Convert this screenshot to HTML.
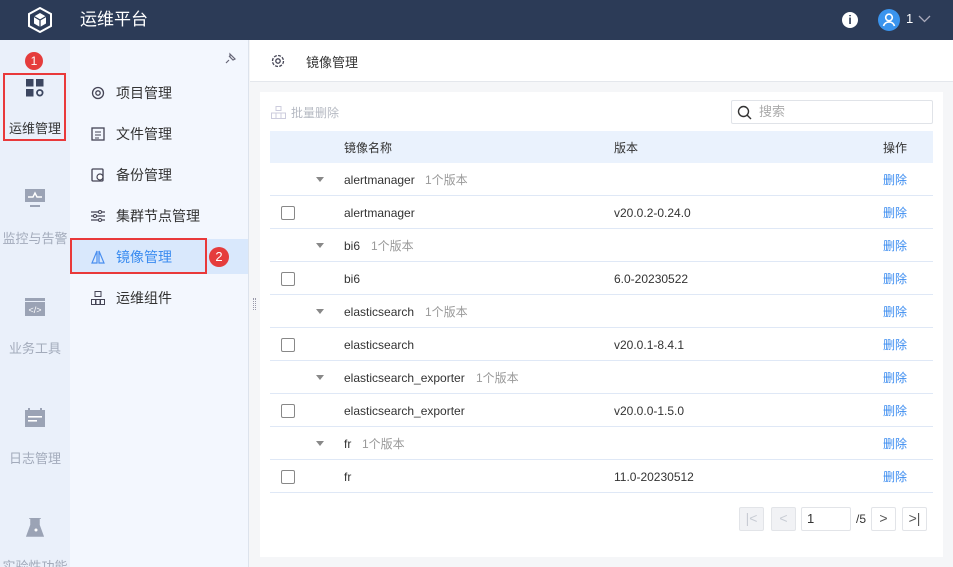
<!DOCTYPE html>
<html><head><meta charset="utf-8"><style>
*{box-sizing:border-box;margin:0;padding:0}
html,body{width:953px;height:567px;overflow:hidden}
body{font-family:"Liberation Sans","Noto Sans CJK SC",sans-serif;font-size:13px;line-height:16px;color:#333;background:#f5f6f8;position:relative}
.top{position:absolute;left:0;top:0;width:953px;height:40px;background:#2c3b57;color:#fff}
.rail{position:absolute;left:0;top:40px;width:70px;height:527px;background:#eaf0fa}
.nav2{position:absolute;left:70px;top:40px;width:179px;height:527px;background:#f3f7fe;border-right:1px solid #dde3ec}
.ri{position:absolute;left:0;width:70px;text-align:center;color:#a3abbb;font-size:13px}
.ni{position:absolute;left:90px;font-size:14px;color:#333}
.hdr{position:absolute;left:250px;top:40px;width:703px;height:42px;background:#fff;border-bottom:1px solid #e4e7ec}
.card{position:absolute;left:260px;top:92px;width:683px;height:465px;background:#fff}
.row{position:absolute;left:270px;width:663px;height:33px;border-bottom:1px solid #dfe8f6;font-size:12px}
.row span{position:absolute;top:10px;line-height:14px}
.cb{position:absolute;left:11px;top:10px;width:14px;height:14px;border:1px solid #888;border-radius:2px;background:#fff}
.tri{position:absolute;left:46px;top:14px;border-left:4px solid transparent;border-right:4px solid transparent;border-top:5px solid #888}
.del{left:613px;color:#3b8cf0}
.pb{position:absolute;top:507px;width:25px;height:24px;border:1px solid #e2e4e8;border-radius:2px;background:#fff;color:#555;text-align:center;line-height:21px;font-size:14px}
</style></head><body>
<div class="top">
<svg style="position:absolute;left:27px;top:7px" width="26" height="26" viewBox="0 0 26 26"><path d="M13 1 L24 7 V19 L13 25 L2 19 V7Z" fill="none" stroke="#fff" stroke-width="2"/><path d="M13 6 L19 9.5 V16.5 L13 20 L7 16.5 V9.5Z" fill="#fff"/><path d="M7 9.5 L13 13 L19 9.5 M13 13V20" stroke="#2c3b57" stroke-width="1.2" fill="none"/></svg>
<div style="position:absolute;left:80px;top:10px;font-size:17px;line-height:20px">运维平台</div>
<div style="position:absolute;left:842px;top:12px;width:16px;height:16px;border-radius:50%;background:#fff;color:#2c3b57;font-weight:bold;font-size:12px;text-align:center;line-height:16px">i</div>
<div style="position:absolute;left:878px;top:9px;width:22px;height:22px;border-radius:50%;background:#3a94ee"><svg width="22" height="22" viewBox="0 0 22 22"><circle cx="11" cy="8.5" r="3.3" fill="none" stroke="#fff" stroke-width="1.6"/><path d="M5.5 17c1-3 3-4 5.5-4s4.5 1 5.5 4" fill="none" stroke="#fff" stroke-width="1.6"/></svg></div>
<div style="position:absolute;left:906px;top:11px;font-size:13px">1</div>
<svg style="position:absolute;left:918px;top:15px" width="13" height="8"><path d="M1 1l5.5 5.5L12 1" fill="none" stroke="#aab" stroke-width="1.3"/></svg>
</div>
<div class="rail">
<div style="position:absolute;left:3px;top:33px;width:63px;height:68px;border:2px solid #e9393a"></div>
<div style="position:absolute;left:25px;top:12px;width:18px;height:18px;border-radius:50%;background:#e53c3c;color:#fff;font-size:12px;text-align:center;line-height:18px">1</div>
<svg style="position:absolute;left:26px;top:39px" width="18" height="18"><rect x="0" y="0" width="7.5" height="7.5" fill="#3c4660"/><rect x="10" y="0" width="7.5" height="7.5" fill="#3c4660"/><rect x="0" y="10" width="7.5" height="7.5" fill="#3c4660"/><circle cx="13.8" cy="13.8" r="2.8" fill="none" stroke="#3c4660" stroke-width="1.8"/></svg>
<div class="ri" style="top:81px;color:#333">运维管理</div>
<svg style="position:absolute;left:25px;top:149px" width="20" height="19"><rect x="0" y="0" width="20" height="13" fill="#9ba3b5"/><path d="M3 8h5l2-4 2 4h5" stroke="#fff" fill="none" stroke-width="1.4"/><rect x="5" y="16" width="10" height="2" fill="#9ba3b5"/></svg>
<div class="ri" style="top:191px">监控与告警</div>
<svg style="position:absolute;left:25px;top:258px" width="20" height="18"><rect width="20" height="18" fill="#9ba3b5"/><rect y="3" width="20" height="1" fill="#eaf0fa"/><text x="10" y="15" font-size="9" fill="#fff" text-anchor="middle" font-family="Liberation Sans">&lt;/&gt;</text></svg>
<div class="ri" style="top:301px">业务工具</div>
<svg style="position:absolute;left:25px;top:368px" width="20" height="19"><rect x="0" y="2" width="20" height="17" fill="#9ba3b5"/><rect x="3" y="0" width="2" height="4" fill="#9ba3b5"/><rect x="15" y="0" width="2" height="4" fill="#9ba3b5"/><rect x="3" y="8" width="14" height="1.6" fill="#fff"/><rect x="3" y="12" width="9" height="1.6" fill="#fff"/></svg>
<div class="ri" style="top:411px">日志管理</div>
<svg style="position:absolute;left:26px;top:478px" width="18" height="19"><path d="M3 0h12M5 0v7L1 18h16L13 7V0" fill="#9ba3b5" stroke="#9ba3b5" stroke-width="1.5"/><circle cx="10" cy="12" r="1.5" fill="#fff"/></svg>
<div class="ri" style="top:519px">实验性功能</div>
</div>
<div class="nav2">
<svg style="position:absolute;left:154px;top:12px" width="13" height="13"><path d="M2 11l3-3M5 4l4 4M6 2l5 5-2 1-3-3z" stroke="#667" fill="none" stroke-width="1.2"/></svg>
<div style="position:absolute;left:0;top:199px;width:178px;height:35px;background:#d9e8fc"></div>
<div style="position:absolute;left:0;top:198px;width:137px;height:36px;border:2px solid #e9393a"></div>
<div style="position:absolute;left:139px;top:207px;width:20px;height:20px;border-radius:50%;background:#e53c3c;color:#fff;font-size:13px;text-align:center;line-height:20px">2</div>
</div>
<svg style="position:absolute;left:91px;top:86px" width="14" height="14"><circle cx="7" cy="7" r="5.5" fill="none" stroke="#445" stroke-width="1.3"/><circle cx="7" cy="7" r="2.2" fill="none" stroke="#445" stroke-width="1.3"/></svg>
<div class="ni" style="left:116px;top:85px">项目管理</div>
<svg style="position:absolute;left:91px;top:127px" width="14" height="14"><rect x="1" y="1" width="12" height="12" fill="none" stroke="#445" stroke-width="1.3"/><path d="M4 5h6M4 8h6M4 11h4" stroke="#445"/></svg>
<div class="ni" style="left:116px;top:126px">文件管理</div>
<svg style="position:absolute;left:91px;top:168px" width="14" height="14"><rect x="1" y="1" width="11" height="12" rx="1" fill="none" stroke="#445" stroke-width="1.3"/><circle cx="9" cy="9" r="3" fill="#fff" stroke="#445" stroke-width="1.2"/></svg>
<div class="ni" style="left:116px;top:167px">备份管理</div>
<svg style="position:absolute;left:91px;top:209px" width="14" height="14"><path d="M0 3h14M0 7h14M0 11h14" stroke="#445" stroke-width="1.2"/><circle cx="9" cy="3" r="1.5" fill="#fff" stroke="#445"/><circle cx="4" cy="7" r="1.5" fill="#fff" stroke="#445"/><circle cx="9" cy="11" r="1.5" fill="#fff" stroke="#445"/></svg>
<div class="ni" style="left:116px;top:208px">集群节点管理</div>
<svg style="position:absolute;left:91px;top:250px" width="14" height="14"><path d="M6 1L1 13h5zM8 1l5 12H8z" fill="none" stroke="#4a8ff0" stroke-width="1.2"/></svg>
<div class="ni" style="left:116px;top:249px;color:#3b8cf0">镜像管理</div>
<svg style="position:absolute;left:91px;top:291px" width="14" height="14"><rect x="4" y="0.5" width="6" height="5" fill="none" stroke="#445"/><rect x="0.5" y="8.5" width="4" height="5" fill="none" stroke="#445"/><rect x="5" y="8.5" width="4" height="5" fill="none" stroke="#445"/><rect x="9.5" y="8.5" width="4" height="5" fill="none" stroke="#445"/></svg>
<div class="ni" style="left:116px;top:290px">运维组件</div>
<div style="position:absolute;left:253px;top:298px;width:3px;height:12px;border-left:1px dotted #99a;border-right:1px dotted #99a"></div>
<div class="hdr">
<svg style="position:absolute;left:21px;top:14px" width="14" height="14"><circle cx="7" cy="7" r="5.5" fill="none" stroke="#445" stroke-width="1.3" stroke-dasharray="3 1.3"/><circle cx="7" cy="7" r="2.2" fill="none" stroke="#445" stroke-width="1.3"/></svg>
<div style="position:absolute;left:56px;top:15px;font-size:13px;color:#333">镜像管理</div>
</div>
<div class="card"></div>
<svg style="position:absolute;left:271px;top:106px" width="15" height="13"><rect x="5" y="0.5" width="5" height="4" fill="none" stroke="#ccd"/><path d="M0.5 12.5V7h14v5.5zM5 7v5M10 7v5" fill="none" stroke="#ccd"/></svg>
<div style="position:absolute;left:291px;top:105px;font-size:12px;color:#b5b9c2">批量删除</div>
<div style="position:absolute;left:731px;top:100px;width:202px;height:24px;border:1px solid #e0e3e8;border-radius:2px"></div>
<svg style="position:absolute;left:737px;top:105px" width="15" height="15"><circle cx="6.5" cy="6.5" r="5" fill="none" stroke="#333" stroke-width="1.4"/><path d="M10 10l4 4" stroke="#333" stroke-width="1.4"/></svg>
<div style="position:absolute;left:759px;top:104px;font-size:13px;color:#aaa">搜索</div>
<div class="row" style="top:131px;height:32px;background:#eaf2fd;border:none;font-size:12px"><span style="left:74px">镜像名称</span><span style="left:344px">版本</span><span style="left:613px">操作</span></div>
<div class="row" style="top:163px"><i class="tri"></i><span style="left:74px">alertmanager</span><span style="left:155px;color:#999">1个版本</span><span class="del">删除</span></div>
<div class="row" style="top:196px"><i class="cb"></i><span style="left:74px">alertmanager</span><span style="left:344px">v20.0.2-0.24.0</span><span class="del">删除</span></div>
<div class="row" style="top:229px"><i class="tri"></i><span style="left:74px">bi6</span><span style="left:101px;color:#999">1个版本</span><span class="del">删除</span></div>
<div class="row" style="top:262px"><i class="cb"></i><span style="left:74px">bi6</span><span style="left:344px">6.0-20230522</span><span class="del">删除</span></div>
<div class="row" style="top:295px"><i class="tri"></i><span style="left:74px">elasticsearch</span><span style="left:155px;color:#999">1个版本</span><span class="del">删除</span></div>
<div class="row" style="top:328px"><i class="cb"></i><span style="left:74px">elasticsearch</span><span style="left:344px">v20.0.1-8.4.1</span><span class="del">删除</span></div>
<div class="row" style="top:361px"><i class="tri"></i><span style="left:74px">elasticsearch_exporter</span><span style="left:206px;color:#999">1个版本</span><span class="del">删除</span></div>
<div class="row" style="top:394px"><i class="cb"></i><span style="left:74px">elasticsearch_exporter</span><span style="left:344px">v20.0.0-1.5.0</span><span class="del">删除</span></div>
<div class="row" style="top:427px"><i class="tri"></i><span style="left:74px">fr</span><span style="left:92px;color:#999">1个版本</span><span class="del">删除</span></div>
<div class="row" style="top:460px"><i class="cb"></i><span style="left:74px">fr</span><span style="left:344px">11.0-20230512</span><span class="del">删除</span></div>
<div class="pb" style="left:739px;background:#f1f2f5;color:#c8ccd4">|&lt;</div>
<div class="pb" style="left:771px;background:#f1f2f5;color:#c8ccd4">&lt;</div>
<div class="pb" style="left:801px;width:50px;text-align:left;padding-left:5px;font-size:13px;color:#333">1</div>
<div style="position:absolute;left:856px;top:511px;font-size:12px">/5</div>
<div class="pb" style="left:871px">&gt;</div>
<div class="pb" style="left:902px">&gt;|</div>
</body></html>
